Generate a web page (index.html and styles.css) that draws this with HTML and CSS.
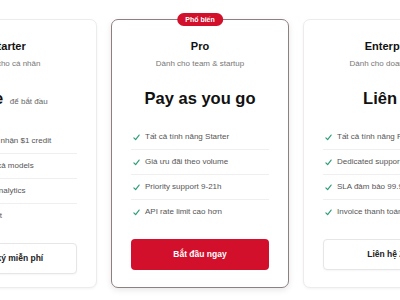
FILE: index.html
```html
<!DOCTYPE html>
<html lang="vi">
<head>
<meta charset="utf-8">
<title>Bảng giá</title>
<link rel="stylesheet" href="styles.css">
</head>
<body>
<div class="wrap">
  <div class="card">
    <div class="title">Starter</div>
    <div class="sub">Dành cho cá nhân</div>
    <div class="price">Free <span class="note">để bắt đầu</span></div>
    <ul class="feats">
      <li><svg class="chk" viewBox="0 0 8 8"><path d="M1 4.4 3 6.5 7 1.2"/></svg>Đăng ký mới nhận $1 credit</li>
      <li><svg class="chk" viewBox="0 0 8 8"><path d="M1 4.4 3 6.5 7 1.2"/></svg>Truy cập tất cả models</li>
      <li><svg class="chk" viewBox="0 0 8 8"><path d="M1 4.4 3 6.5 7 1.2"/></svg>Dashboard analytics</li>
      <li><svg class="chk" viewBox="0 0 8 8"><path d="M1 4.4 3 6.5 7 1.2"/></svg>Email support</li>
    </ul>
    <a class="btn ghost">Đăng ký miễn phí</a>
  </div>
  <div class="card pro">
    <span class="badge">Phổ biến</span>
    <div class="title">Pro</div>
    <div class="sub">Dành cho team &amp; startup</div>
    <div class="price">Pay as you go</div>
    <ul class="feats">
      <li><svg class="chk" viewBox="0 0 8 8"><path d="M1 4.4 3 6.5 7 1.2"/></svg>Tất cả tính năng Starter</li>
      <li><svg class="chk" viewBox="0 0 8 8"><path d="M1 4.4 3 6.5 7 1.2"/></svg>Giá ưu đãi theo volume</li>
      <li><svg class="chk" viewBox="0 0 8 8"><path d="M1 4.4 3 6.5 7 1.2"/></svg>Priority support 9-21h</li>
      <li><svg class="chk" viewBox="0 0 8 8"><path d="M1 4.4 3 6.5 7 1.2"/></svg>API rate limit cao hơn</li>
    </ul>
    <a class="btn solid">Bắt đầu ngay</a>
  </div>
  <div class="card">
    <div class="title">Enterprise</div>
    <div class="sub">Dành cho doanh nghiệp</div>
    <div class="price">Liên hệ</div>
    <ul class="feats">
      <li><svg class="chk" viewBox="0 0 8 8"><path d="M1 4.4 3 6.5 7 1.2"/></svg>Tất cả tính năng Pro</li>
      <li><svg class="chk" viewBox="0 0 8 8"><path d="M1 4.4 3 6.5 7 1.2"/></svg>Dedicated support</li>
      <li><svg class="chk" viewBox="0 0 8 8"><path d="M1 4.4 3 6.5 7 1.2"/></svg>SLA đảm bảo 99.9%</li>
      <li><svg class="chk" viewBox="0 0 8 8"><path d="M1 4.4 3 6.5 7 1.2"/></svg>Invoice thanh toán VAT</li>
    </ul>
    <a class="btn ghost">Liên hệ Zalo</a>
  </div>
</div>
</body>
</html>
```
FILE: styles.css
```css
html, body {
  margin: 0;
  padding: 0;
  background: #ffffff;
  overflow: hidden;
}
body {
  width: 400px;
  height: 300px;
  font-family: "Liberation Sans", Arial, sans-serif;
  color: #111;
}
.wrap {
  display: flex;
  justify-content: center;
  gap: 14px;
  padding-top: 19px;
}
.card {
  flex: 0 0 178px;
  box-sizing: border-box;
  height: 269px;
  position: relative;
  display: flex;
  flex-direction: column;
  padding: 19px 19px 19px;
  border: 1px solid #ececec;
  border-radius: 7px;
  box-shadow: 0 1px 3px rgba(0,0,0,0.05);
  text-align: center;
  background: #fff;
}
.card.pro {
  border: 1px solid #8e8080;
  box-shadow: 0 2px 6px rgba(0,0,0,0.10);
}
.badge {
  position: absolute;
  top: -7px;
  left: 50%;
  transform: translateX(-50%);
  height: 13px;
  line-height: 13px;
  padding: 0 8px;
  border-radius: 7px;
  background: #d2102c;
  color: #fff;
  font-size: 7px;
  font-weight: 700;
  white-space: nowrap;
}
.title {
  font-size: 11px;
  font-weight: 700;
  line-height: 14px;
}
.sub {
  margin-top: 5px;
  font-size: 8px;
  line-height: 12px;
  color: #777;
}
.price {
  margin-top: 17px;
  font-size: 16.5px;
  font-weight: 700;
  line-height: 22px;
  white-space: nowrap;
}
.note {
  font-size: 8px;
  font-weight: 400;
  color: #666;
  margin-left: 2px;
}
.feats {
  list-style: none;
  margin: 16px 0 0;
  padding: 0;
  text-align: left;
}
.feats li {
  display: flex;
  align-items: center;
  padding: 6px 0 6px 2px;
  line-height: 12px;
  font-size: 8px;
  color: #555;
  border-bottom: 1px solid #efefef;
  white-space: nowrap;
}
.feats li:last-child {
  border-bottom: none;
}
.chk {
  width: 7px;
  height: 7px;
  margin-right: 5px;
  flex: 0 0 7px;
  fill: none;
  stroke: #2b9e7c;
  stroke-width: 1.3;
  stroke-linecap: round;
  stroke-linejoin: round;
}
.btn {
  display: block;
  margin-top: 15px;
  height: 31px;
  line-height: 31px;
  box-sizing: border-box;
  border-radius: 4px;
  font-size: 8.5px;
  font-weight: 700;
  white-space: nowrap;
}
.btn.solid {
  background: #d2102c;
  color: #fff;
}
.btn.ghost {
  background: #fff;
  color: #222;
  border: 1px solid #e6e6e6;
  line-height: 29px;
  box-shadow: 0 1px 2px rgba(0,0,0,0.04);
}
```
